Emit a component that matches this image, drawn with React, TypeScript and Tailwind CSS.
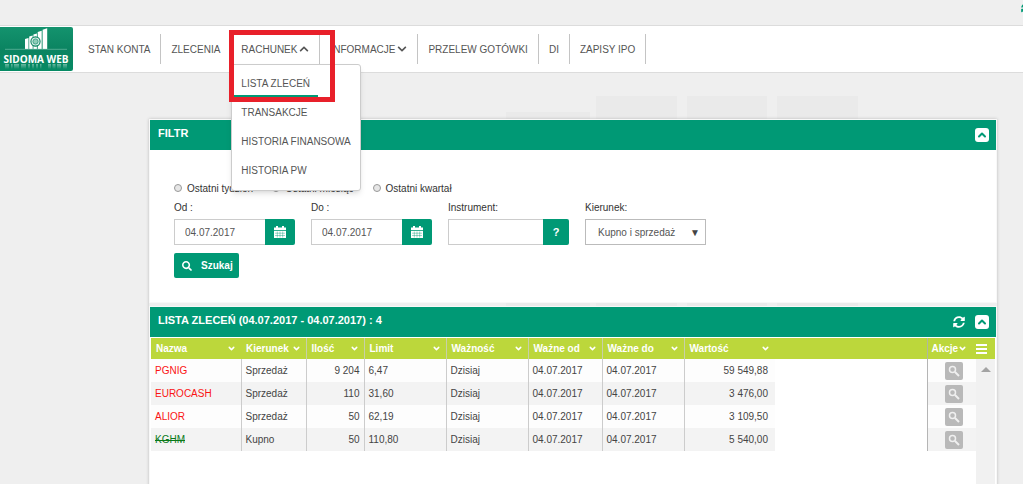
import React from "react";
import { ChevronDown, ChevronUp } from "lucide-react";
import { FaChevronDown, FaChevronUp, FaSearch, FaSyncAlt } from "react-icons/fa";

const orders = [
  { name: "PGNIG", side: "Sprzedaż", qty: "9 204", limit: "6,47", validity: "Dzisiaj", from: "04.07.2017", to: "04.07.2017", value: "59 549,88", style: "text-[#fa1414]" },
  { name: "EUROCASH", side: "Sprzedaż", qty: "110", limit: "31,60", validity: "Dzisiaj", from: "04.07.2017", to: "04.07.2017", value: "3 476,00", style: "text-[#fa1414]" },
  { name: "ALIOR", side: "Sprzedaż", qty: "50", limit: "62,19", validity: "Dzisiaj", from: "04.07.2017", to: "04.07.2017", value: "3 109,50", style: "text-[#fa1414]" },
  { name: "KGHM", side: "Kupno", qty: "50", limit: "110,80", validity: "Dzisiaj", from: "04.07.2017", to: "04.07.2017", value: "5 540,00", style: "text-[#0a7a1a] line-through" },
];

const columns = ["Nazwa", "Kierunek", "Ilość", "Limit", "Ważność", "Ważne od", "Ważne do", "Wartość"];

function Logo() {
  return (
    <a href="#" aria-label="Sidoma Web" className="block h-11 w-[73px] shrink-0">
      <svg viewBox="0 0 73 44" className="h-full w-full">
        <defs>
          <linearGradient id="logoBg" x1="0" y1="0" x2="0" y2="1">
            <stop offset="0" stopColor="#14936e" />
            <stop offset="0.5" stopColor="#0b8461" />
            <stop offset="1" stopColor="#068a64" />
          </linearGradient>
          <linearGradient id="mirror" x1="0" y1="0" x2="0" y2="1">
            <stop offset="0" stopColor="#fff" stopOpacity="0.4" />
            <stop offset="1" stopColor="#fff" stopOpacity="0" />
          </linearGradient>
        </defs>
        <path d="M0 0H71Q73 0 73 2V42Q73 44 71 44H0Z" fill="url(#logoBg)" />
        <path
          d="M25 12l3.500-1V22H25zM29.200 9.500l3.500-1V22h-3.500zM33.400 7.500l3.500-1V22h-3.500zM37.700 5l4-1.200V22h-4zM42.600 2.800l4.600-1.600V22h-4.600z"
          fill="#fff"
        />
        <circle cx="35.500" cy="14.500" r="4.600" fill="#d9efe8" stroke="#0b8461" strokeWidth="1.100" />
        <circle cx="35.500" cy="14.500" r="2.600" fill="#8fcdb8" stroke="#2b967a" strokeWidth="0.800" />
        <path d="M5 22.300H67" stroke="#6dbaa3" strokeWidth="0.700" />
        <text x="36" y="36" textAnchor="middle" fill="#fff" fontFamily="'Open Sans', sans-serif" fontWeight="700" fontSize="10">SIDOMA WEB</text>
        <path
          d="M5 37h4v5H5zM11 37h1.600v5H11zM14 37h5v5h-5zM21 37h5v5h-5zM28 37h2v5h-2zM32 37h2v5h-2zM36 37h2v5h-2zM40 37h1.500v5H40zM48 37h3v5h-3zM52.500 37h3v5h-3zM57 37h4v5h-4zM63 37h4v5h-4z"
          fill="url(#mirror)"
        />
      </svg>
    </a>
  );
}

function CalendarIcon() {
  return (
    <svg viewBox="0 0 12 12" className="h-3 w-3" aria-hidden="true">
      <path d="M0 1.500h2V0h2v1.500h4V0h2v1.500h2V4H0z" fill="#fff" />
      <path d="M0 4.800h12V12H0z" fill="#fff" />
      <path d="M1 7.200h10M1 9.500h10M3.300 5.500v6M6 5.500v6M8.700 5.500v6" stroke="#009975" strokeWidth="0.400" />
    </svg>
  );
}

function SearchGlyph() {
  return (
    <svg viewBox="0 0 12 12" className="h-3 w-3" fill="none" stroke="currentColor" aria-hidden="true">
      <circle cx="4.500" cy="4.500" r="3" strokeWidth="1.500" />
      <path d="M7 7l4 4" strokeWidth="2" />
    </svg>
  );
}

function NavItem({ label, icon, children }: { label: string; icon?: React.ReactNode; children?: React.ReactNode }) {
  return (
    <li className="relative flex h-[30px] items-center border-r border-[#c4c4c4] px-[10px]">
      <a href="#" className="flex items-center gap-[2px] whitespace-nowrap">
        {label}
        {icon}
      </a>
      {children}
    </li>
  );
}

function PanelTitle({ title, children }: { title: string; children?: React.ReactNode }) {
  return (
    <div className="flex h-[30px] items-center justify-between bg-[#009975] pr-[7px] pl-2 text-white">
      <h2 className="pb-[3px] text-[11px] font-bold">{title}</h2>
      <div className="flex items-center gap-[10px]">
        {children}
        <button type="button" aria-label="Zwiń" className="flex h-[14px] w-[14px] items-center justify-center rounded-[3px] bg-white text-[#009975]">
          <ChevronUp size={12} strokeWidth={4} />
        </button>
      </div>
    </div>
  );
}

function Field({ id, label, children }: { id: string; label: string; children: React.ReactNode }) {
  return (
    <div className="flex w-[121px] flex-col gap-[5px]">
      <label htmlFor={id} className="leading-3">{label}</label>
      <div className="relative flex h-[26px]">{children}</div>
    </div>
  );
}

function DateField({ id, label }: { id: string; label: string }) {
  return (
    <Field id={id} label={label}>
      <input id={id} defaultValue="04.07.2017" className="w-0 min-w-0 flex-1 border border-r-0 border-[#ccc] bg-white px-[10px] text-[#555] outline-none" />
      <button type="button" aria-label="Kalendarz" className="flex w-[30px] items-center justify-center rounded-r-[2px] bg-[#009975]">
        <CalendarIcon />
      </button>
    </Field>
  );
}

function Radio({ label }: { label: string }) {
  return (
    <label className="flex items-center gap-[5px] whitespace-nowrap">
      <input type="radio" name="period" className="h-2 w-2 appearance-none rounded-full border border-[#999] bg-[#e6e6e6]" />
      {label}
    </label>
  );
}

export default function App() {
  return (
    <div className="relative h-screen overflow-hidden bg-[#efefef] pt-[25px] font-['Liberation_Sans',Arial,sans-serif] text-[10px] text-[#333]">
      <button type="button" aria-label="Odśwież" className="absolute top-[3px] -right-2 text-[#009975]">
        <FaSyncAlt size={10} />
      </button>
      <div className="absolute inset-x-0 top-24 flex items-end pl-[506px]" aria-hidden="true">
        <div className="mr-[6px] h-[194px] w-[84px] bg-[#eaeaea]" />
        <div className="mr-[10px] h-[210px] w-[81px] bg-[#eaeaea]" />
        <div className="mr-[10px] h-[210px] w-[80px] bg-[#eaeaea]" />
        <div className="h-[210px] w-[81px] bg-[#eaeaea]" />
      </div>

      <header className="relative z-10 flex h-12 items-center border-y border-[#dcdcdc] bg-white text-[#555]">
        <Logo />
        <nav className="pl-[5px]">
          <ul className="flex items-center">
            <NavItem label="STAN KONTA" />
            <NavItem label="ZLECENIA" />
            <NavItem label="RACHUNEK" icon={<FaChevronUp size={10} />}>
              <ul className="absolute top-[30px] left-0 z-10 w-[130px] rounded-[3px] border border-[#ccc] bg-white pt-[3px] pb-[5px] shadow-md">
                <li className="flex h-[30px] items-center whitespace-nowrap">
                  <a href="#" className="flex h-full w-[86px] items-center border-b-[3px] border-[#009975] pt-1 pl-[9px]">LISTA ZLECEŃ</a>
                </li>
                {["TRANSAKCJE", "HISTORIA FINANSOWA", "HISTORIA PW"].map((t) => (
                  <li key={t} className="flex h-[29px] items-center pl-[9px] whitespace-nowrap">
                    <a href="#">{t}</a>
                  </li>
                ))}
              </ul>
              <div className="pointer-events-none absolute -top-1 -left-[2px] z-20 h-[72px] w-[106px] border-[5px] border-[#e8202a]" />
            </NavItem>
            <NavItem label="INFORMACJE" icon={<FaChevronDown size={10} />} />
            <NavItem label="PRZELEW GOTÓWKI" />
            <NavItem label="DI" />
            <NavItem label="ZAPISY IPO" />
          </ul>
        </nav>
      </header>

      <main className="relative mt-[46px] mr-[26px] ml-[149px] shadow-[0_0_3px_#bbb]">
        <section className="border border-[#f8f8f8] bg-white">
          <PanelTitle title="FILTR" />
          <form className="flex h-[152px] flex-col px-6 pt-8">
            <div className="flex h-3 gap-[19px]">
              <Radio label="Ostatni tydzień" />
              <Radio label="Ostatni miesiąc" />
              <Radio label="Ostatni kwartał" />
            </div>
            <div className="mt-2 flex gap-4">
              <DateField id="from" label="Od :" />
              <DateField id="to" label="Do :" />
              <Field id="instrument" label="Instrument:">
                <input id="instrument" className="w-0 min-w-0 flex-1 border border-r-0 border-[#ccc] bg-white px-2 outline-none" />
                <button type="button" className="w-[26px] rounded-r-[2px] bg-[#009975] text-[11px] font-bold text-white">?</button>
              </Field>
              <Field id="side" label="Kierunek:">
                <select id="side" className="h-full w-full appearance-none border border-[#bbb] bg-white pl-3 text-[#555] outline-none">
                  <option>Kupno i sprzedaż</option>
                </select>
                <span className="pointer-events-none absolute inset-y-0 right-[6px] flex items-center text-[#444]">▼</span>
              </Field>
            </div>
            <button type="button" className="mt-2 flex h-[25px] w-[65px] items-center gap-[9px] rounded-[2px] bg-[#009975] pl-2 font-bold text-white">
              <FaSearch size={10} />
              Szukaj
            </button>
          </form>
        </section>

        <section className="mt-[3px] border border-[#f8f8f8] bg-white">
          <PanelTitle title="LISTA ZLECEŃ (04.07.2017 - 04.07.2017) : 4">
            <button type="button" aria-label="Odśwież listę"><FaSyncAlt size={12} /></button>
          </PanelTitle>
          <div className="mt-px px-px">
            <table className="w-full table-fixed border-collapse text-[#444]">
              <colgroup>
                <col className="w-[90px]" />
                <col className="w-[65px]" />
                <col className="w-[58px]" />
                <col className="w-[82px]" />
                <col className="w-[82px]" />
                <col className="w-[74px]" />
                <col className="w-[82px]" />
                <col className="w-[91px]" />
                <col />
                <col className="w-[49px]" />
                <col className="w-[19px]" />
              </colgroup>
              <thead>
                <tr className="h-[21px] bg-[#bcd73b] text-left text-white">
                  {columns.map((c, i) => (
                    <th key={c} className={`px-[5px] ${i > 0 && i < 7 ? "border-r border-[#c8d0a8]" : ""}`}>
                      <span className="flex items-center justify-between whitespace-nowrap">
                        {c}
                        <ChevronDown size={9} strokeWidth={4} className="shrink-0" />
                      </span>
                    </th>
                  ))}
                  <td className="border-r border-[#b0b8a0]" />
                  <th className="pl-1">
                    <span className="flex items-center whitespace-nowrap">
                      Akcje
                      <ChevronDown size={9} strokeWidth={4} />
                    </span>
                  </th>
                  <td>
                    <button type="button" aria-label="Menu" className="block">
                      <svg viewBox="0 0 11 10" className="h-[10px] w-[11px]" aria-hidden="true">
                        <path d="M0 0h11v2H0zM0 4h11v2H0zM0 8h11v2H0z" fill="#fff" />
                      </svg>
                    </button>
                  </td>
                </tr>
              </thead>
              <tbody>
                {orders.map((o, i) => {
                  const bg = i % 2 ? "bg-[#f3f3f3]" : "bg-[#fdfdfd]";
                  const cell = `border-r border-[#ccc] pl-1 ${bg}`;
                  return (
                    <tr key={o.name} className="h-[23px]">
                      <td className={`${cell} ${o.style}`}>{o.name}</td>
                      <td className={cell}>{o.side}</td>
                      <td className={`${cell} pr-1 text-right`}>{o.qty}</td>
                      <td className={cell}>{o.limit}</td>
                      <td className={cell}>{o.validity}</td>
                      <td className={cell}>{o.from}</td>
                      <td className={cell}>{o.to}</td>
                      <td className={`pr-[7px] text-right ${bg}`}>{o.value}</td>
                      <td className="border-r border-[#b5b5b5]" />
                      <td className={`pl-[17px] ${bg}`}>
                        <button type="button" aria-label="Szczegóły" className="flex h-[18px] w-[18px] items-center justify-center rounded-[2px] bg-[#b9b9b9] text-[#f0f0f0]">
                          <SearchGlyph />
                        </button>
                      </td>
                      {i === 0 && (
                        <td rowSpan={5} className="bg-[#f1f1f1] pt-2 align-top">
                          <svg viewBox="0 0 10 5" className="mx-auto h-[5px] w-[10px]" aria-hidden="true">
                            <path d="M0 5L5 0l5 5z" fill="#a3a3a3" />
                          </svg>
                        </td>
                      )}
                    </tr>
                  );
                })}
                <tr className="h-20">
                  <td colSpan={10} />
                </tr>
              </tbody>
            </table>
          </div>
        </section>
      </main>
    </div>
  );
}
